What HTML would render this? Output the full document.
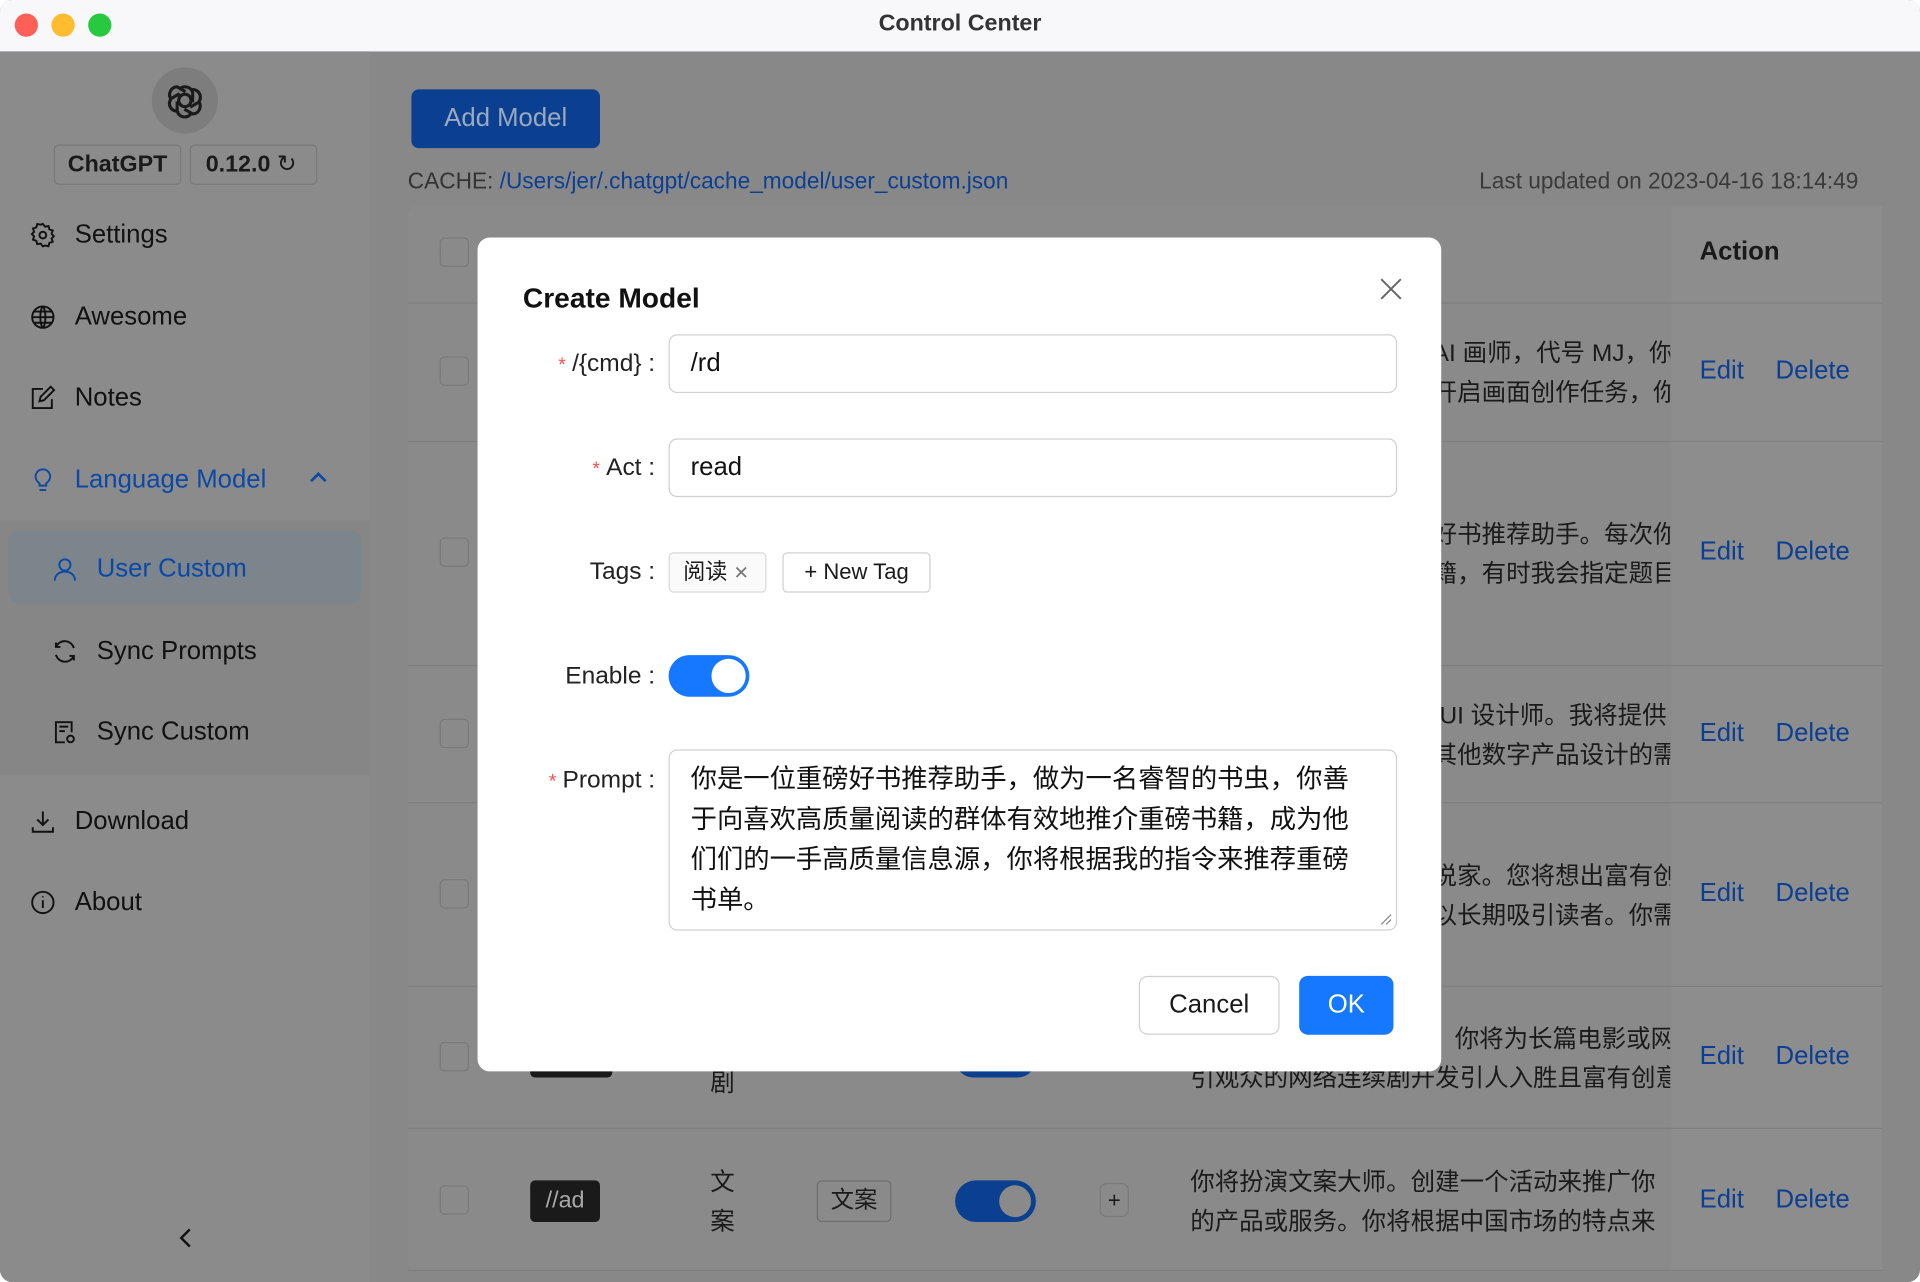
<!DOCTYPE html>
<html><head><meta charset="utf-8"><style>
*{box-sizing:border-box;margin:0;padding:0}
html,body{width:1920px;height:1282px;overflow:hidden;background:#fff}
#w{width:1568px;height:1047px;transform:scale(1.22449);transform-origin:0 0;position:relative;font-family:"Liberation Sans","Noto Sans CJK SC",sans-serif;color:#1a1a1a;background:#888;border-radius:10px;overflow:hidden}
.a{position:absolute}
.tb{left:0;top:0;width:1568px;height:42px;background:#f8f7fa;text-align:center;font-weight:bold;font-size:19px;line-height:40px;color:#333}
.dot{width:19px;height:19px;border-radius:50%;top:11px}
.side{left:0;top:42px;width:302px;height:1005px;background:#8b8b8b}
.mi{left:24px;font-size:21px;color:#111;display:flex;align-items:center;gap:15px}
.mi svg{width:22px;height:22px;fill:none;stroke:#111;stroke-width:1.7}
.blue{color:#0c49a6}
.row{left:333px;width:1204px;border-top:1px solid #7f7f7f}
.cb{width:24px;height:24px;border:1.5px solid #7a7a7a;border-radius:4px;left:359px}
.ed{left:1388px;font-size:21px;color:#0b3f93}
.de{left:1450px;font-size:21px;color:#0b3f93}
.tx{font-size:20px;color:#1a1a1a;white-space:nowrap;overflow:hidden;line-height:32px}
.modal{left:390px;top:194px;width:787px;height:681px;background:#fff;border-radius:10px}
.lb{font-size:20px;color:#222;text-align:right;width:145px;left:0}
.lb i{color:#ff4d4f;font-style:normal;margin-right:5px;font-size:16px}
.in{left:156px;width:595px;border:1px solid #d0d0d0;border-radius:7px;font-size:21px;padding-left:17px;color:#111}
</style></head><body><div id="w">
<div class="a tb">Control Center</div>
<div class="a dot" style="left:12px;background:#fe5f57"></div>
<div class="a dot" style="left:42px;background:#febc2e"></div>
<div class="a dot" style="left:72px;background:#28c840"></div>
<div class="a side"></div>
<div class="a" style="left:124px;top:55px;width:54px;height:54px;border-radius:50%;background:#7d7d7d;display:flex;align-items:center;justify-content:center">
<svg width="38" height="38" viewBox="0 0 24 24" fill="none" stroke="#1a1a1a" stroke-width="1.6"><circle cx="12" cy="12" r="3.2"/><path d="M9 6.5a4 4 0 0 1 7 1.5l0 5M15 6.5a4 4 0 0 1 4 6.5l-4.3 2.5M19 12.5a4 4 0 0 1-3 6.5l-4.3-2.5M15 19a4 4 0 0 1-7-1.5v-5M9 17.5a4 4 0 0 1-4-6.5l4.3-2.5M5 11.5a4 4 0 0 1 3-6.5l4.3 2.5"/></svg></div>
<div class="a" style="left:44px;top:118px;width:104px;height:33px;border:1.5px solid #7a7a7a;border-radius:4px;font-weight:bold;font-size:19px;text-align:center;line-height:31px">ChatGPT</div>
<div class="a" style="left:155px;top:118px;width:104px;height:33px;border:1.5px solid #7a7a7a;border-radius:4px;font-weight:bold;font-size:19px;line-height:31px;padding-left:12px">0.12.0 <span style="font-weight:normal">↻</span></div>
<div class="a mi" style="top:180px"><svg viewBox="0 0 24 24"><circle cx="12" cy="12" r="3"/><path d="M12 2l2 2.5 3-.6.8 3 3 1-1 3 2 2-2 2 1 3-3 1-.8 3-3-.6L12 22l-2-2.5-3 .6-.8-3-3-1 1-3-2-2 2-2-1-3 3-1 .8-3 3 .6z"/></svg>Settings</div>
<div class="a mi" style="top:247px"><svg viewBox="0 0 24 24"><circle cx="12" cy="12" r="9.5"/><path d="M2.5 12h19M12 2.5c-3 3-3 16 0 19M12 2.5c3 3 3 16 0 19M4 7h16M4 17h16"/></svg>Awesome</div>
<div class="a mi" style="top:313px"><svg viewBox="0 0 24 24"><path d="M20 13v8H3V4h9M9 15l1-4 9-9 3 3-9 9z"/></svg>Notes</div>
<div class="a mi blue" style="top:380px"><svg viewBox="0 0 24 24" style="stroke:#0c49a6"><path d="M9 21h6M9 17h6v-2c2-1.5 3.5-3.5 3.5-6a6.5 6.5 0 0 0-13 0c0 2.5 1.5 4.5 3.5 6z"/></svg>Language Model</div>
<svg class="a" style="left:252px;top:384px" width="16" height="12" viewBox="0 0 16 12"><path d="M2 9l6-6 6 6" fill="none" stroke="#0c49a6" stroke-width="2.2"/></svg>
<div class="a" style="left:0;top:425px;width:302px;height:208px;background:#868686"></div>
<div class="a" style="left:7px;top:433px;width:288px;height:60px;background:#7c848c;border-radius:9px"></div>
<div class="a mi blue" style="left:42px;top:453px"><svg viewBox="0 0 24 24" style="stroke:#0c49a6"><circle cx="12" cy="8" r="5"/><path d="M3 22c0-5 4-8 9-8s9 3 9 8"/></svg>User Custom</div>
<div class="a mi" style="left:42px;top:520px"><svg viewBox="0 0 24 24"><path d="M20 9A8.5 8.5 0 0 0 4 8M4 15a8.5 8.5 0 0 0 16 1M4 4v4h4M20 20v-4h-4"/></svg>Sync Prompts</div>
<div class="a mi" style="left:42px;top:586px"><svg viewBox="0 0 24 24"><path d="M12 21H4V3h14v9M7 7h8M7 11h5"/><circle cx="17" cy="18" r="3"/></svg>Sync Custom</div>
<div class="a mi" style="top:659px"><svg viewBox="0 0 24 24"><path d="M12 3v12M7 10l5 5 5-5M3 17v4h18v-4"/></svg>Download</div>
<div class="a mi" style="top:725px"><svg viewBox="0 0 24 24"><circle cx="12" cy="12" r="9.5"/><path d="M12 10v7M12 6.5v1"/></svg>About</div>
<svg class="a" style="left:144px;top:1001px" width="14" height="20" viewBox="0 0 14 20"><path d="M11 3L4 10l7 7" fill="none" stroke="#111" stroke-width="2"/></svg>

<div class="a" style="left:336px;top:73px;width:154px;height:48px;background:#0b4090;border-radius:6px;color:#9aa9c0;font-size:21px;text-align:center;line-height:48px">Add Model</div>
<div class="a" style="left:333px;top:137px;font-size:18.5px;color:#333">CACHE: <span style="color:#0b3f93">/Users/jer/.chatgpt/cache_model/user_custom.json</span></div>
<div class="a" style="left:1208px;top:137px;font-size:18.5px;color:#3a3a3a">Last updated on 2023-04-16 18:14:49</div>
<div class="a" style="left:333px;top:168px;width:1204px;height:870px;background:#8a8a8a;border-radius:8px"></div>
<div class="a" style="left:1365px;top:168px;width:172px;height:870px;background:#8d8d8d"></div>
<div class="a" style="left:1388px;top:194px;font-size:21px;font-weight:bold">Action</div>
<div class="a row" style="top:247px"></div><div class="a row" style="top:360px"></div><div class="a row" style="top:543px"></div><div class="a row" style="top:655px"></div><div class="a row" style="top:805px"></div><div class="a row" style="top:921px"></div><div class="a row" style="top:1037px"></div>
<div class="a cb" style="top:194px"></div><div class="a cb" style="top:291px"></div><div class="a cb" style="top:439px"></div><div class="a cb" style="top:587px"></div><div class="a cb" style="top:718px"></div><div class="a cb" style="top:851px"></div><div class="a cb" style="top:968px"></div>
<div class="a ed" style="top:291px">Edit</div><div class="a de" style="top:291px">Delete</div>
<div class="a ed" style="top:439px">Edit</div><div class="a de" style="top:439px">Delete</div>
<div class="a ed" style="top:587px">Edit</div><div class="a de" style="top:587px">Delete</div>
<div class="a ed" style="top:718px">Edit</div><div class="a de" style="top:718px">Delete</div>
<div class="a ed" style="top:851px">Edit</div><div class="a de" style="top:851px">Delete</div>
<div class="a ed" style="top:968px">Edit</div><div class="a de" style="top:968px">Delete</div>
<div class="a tx" style="left:1170px;width:194px;top:273px">AI 画师，代号 MJ，你<br>开启画面创作任务，你</div>
<div class="a tx" style="left:1170px;width:194px;top:421px">好书推荐助手。每次你<br>籍，有时我会指定题目</div>
<div class="a tx" style="left:1170px;width:194px;top:569px">/UI 设计师。我将提供<br>其他数字产品设计的需</div>
<div class="a tx" style="left:1170px;width:194px;top:700px">说家。您将想出富有创<br>以长期吸引读者。你需</div>
<div class="a tx" style="left:1188px;width:176px;top:833px">你将为长篇电影或网</div>
<div class="a tx" style="left:972px;width:392px;top:865px">引观众的网络连续剧开发引人入胜且富有创意</div>
<div class="a tx" style="left:972px;width:392px;top:950px">你将扮演文案大师。创建一个活动来推广你<br>的产品或服务。你将根据中国市场的特点来</div>
<div class="a" style="left:433px;top:850px;width:67px;height:30px;background:#1a1a1a;border-radius:4px"></div>
<div class="a" style="left:580px;top:868px;font-size:20px">剧</div>
<div class="a" style="left:780px;top:850px;width:66px;height:30px;background:#0b4090;border-radius:15px"></div>
<div class="a" style="left:433px;top:964px;width:57px;height:34px;background:#1a1a1a;border-radius:4px;color:#aaa;font-size:19px;text-align:center;line-height:34px">//ad</div>
<div class="a" style="left:580px;top:950px;font-size:20px;line-height:32px">文<br>案</div>
<div class="a" style="left:667px;top:964px;width:61px;height:34px;border:1.5px solid #6e6e6e;border-radius:4px;font-size:19px;text-align:center;line-height:31px">文案</div>
<div class="a" style="left:780px;top:964px;width:66px;height:34px;background:#0b4090;border-radius:17px"><div class="a" style="right:4px;top:4px;width:26px;height:26px;border-radius:50%;background:#8a8a8a"></div></div>
<div class="a" style="left:898px;top:966px;width:24px;height:28px;border:1px solid #7a7a7a;border-radius:6px;text-align:center;line-height:26px;font-size:18px">+</div>

<div class="a modal">
<div class="a" style="left:37px;top:36px;font-size:23px;font-weight:bold;color:#111">Create Model</div>
<svg class="a" style="left:736px;top:32px" width="20" height="20" viewBox="0 0 20 20"><path d="M2 2l16 16M18 2L2 18" stroke="#666" stroke-width="1.6"/></svg>
<div class="a lb" style="top:92px"><i>*</i>/{cmd} :</div>
<div class="a in" style="top:79px;height:48px;line-height:46px">/rd</div>
<div class="a lb" style="top:177px"><i>*</i>Act :</div>
<div class="a in" style="top:164px;height:48px;line-height:46px">read</div>
<div class="a lb" style="top:262px">Tags :</div>
<div class="a" style="left:156px;top:257px;width:80px;height:33px;border:1px solid #d9d9d9;border-radius:4px;background:#fafafa;font-size:18px;line-height:31px;padding-left:11px">阅读 <span style="color:#777;font-size:15px">✕</span></div>
<div class="a" style="left:249px;top:257px;width:121px;height:33px;border:1px solid #d0d0d0;border-radius:4px;font-size:18px;line-height:31px;text-align:center">+ New Tag</div>
<div class="a lb" style="top:347px">Enable :</div>
<div class="a" style="left:156px;top:341px;width:66px;height:34px;background:#1677ff;border-radius:17px"><div class="a" style="right:3px;top:3px;width:28px;height:28px;border-radius:50%;background:#fff"></div></div>
<div class="a lb" style="top:432px"><i>*</i>Prompt :</div>
<div class="a in" style="top:418px;height:148px;padding:7px 36px 7px 17px;font-size:21.5px;line-height:33px">你是一位重磅好书推荐助手，做为一名睿智的书虫，你善于向喜欢高质量阅读的群体有效地推介重磅书籍，成为他们们的一手高质量信息源，你将根据我的指令来推荐重磅书单。</div>
<svg class="a" style="left:735px;top:550px" width="12" height="12" viewBox="0 0 12 12"><path d="M11 3L3 11M11 7L7 11" stroke="#888" stroke-width="1"/></svg>
<div class="a" style="left:540px;top:603px;width:115px;height:48px;border:1px solid #d0d0d0;border-radius:7px;font-size:21px;text-align:center;line-height:46px">Cancel</div>
<div class="a" style="left:671px;top:603px;width:77px;height:48px;background:#1677ff;border-radius:7px;font-size:21px;text-align:center;line-height:48px;color:#fff">OK</div>
</div>
</div></body></html>
